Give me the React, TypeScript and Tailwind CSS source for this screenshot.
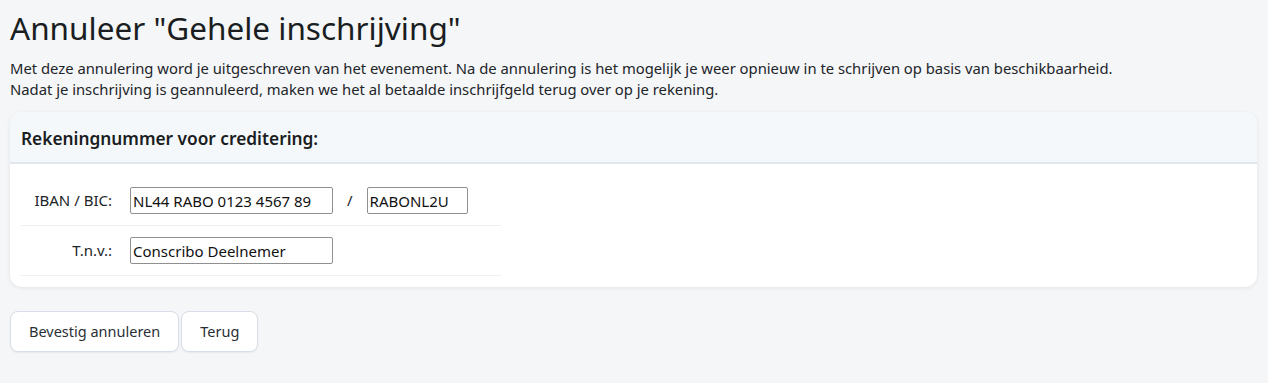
import React from "react";

export default function App() {
  return (
    <div className="min-h-[383px] bg-[#f5f6f8] px-[10px] pt-[6px] text-[#212529] font-['Noto_Sans',sans-serif]">
      <h1 className="text-[31.5px] leading-[44px] font-normal text-[#1a1d21]">Annuleer "Gehele inschrijving"</h1>
      <p className="mt-[8px] text-[14.8px] leading-[21px]">
        Met deze annulering word je uitgeschreven van het evenement. Na de annulering is het mogelijk je weer opnieuw in te schrijven op basis van beschikbaarheid.
        <br />
        Nadat je inschrijving is geannuleerd, maken we het al betaalde inschrijfgeld terug over op je rekening.
      </p>
      <div className="mt-[12px] mr-[1px] rounded-[12px] bg-white shadow-[0_1px_4px_rgba(0,0,0,0.08)] overflow-hidden">
        <div className="h-[52px] bg-[#f5f8fb] border-b-2 border-[#e1e7ef] px-[11px] pt-[3px] flex items-center">
          <h2 className="text-[17.3px] font-semibold text-[#1a1d21]">Rekeningnummer voor creditering:</h2>
        </div>
        <div className="px-[11px] pt-[12px] pb-[11px]">
          <div className="w-[480px]">
            <div className="flex items-center h-[50px] border-b border-[#eef0f3]">
              <div className="w-[91px] text-right text-[15px]">IBAN / BIC:</div>
              <input
                readOnly
                value="NL44 RABO 0123 4567 89"
                className="ml-[18px] w-[203px] h-[27px] border border-[#8f8f8f] rounded-[2px] px-[2px] text-[15px] text-[#111] outline-none"
              />
              <span className="mx-[14px] text-[15px]">/</span>
              <input
                readOnly
                value="RABONL2U"
                className="w-[101px] h-[27px] border border-[#8f8f8f] rounded-[2px] px-[2px] text-[15px] text-[#111] outline-none"
              />
            </div>
            <div className="flex items-center h-[50px] border-b border-[#eef0f3]">
              <div className="w-[91px] text-right text-[15px]">T.n.v.:</div>
              <input
                readOnly
                value="Conscribo Deelnemer"
                className="ml-[18px] w-[203px] h-[27px] border border-[#8f8f8f] rounded-[2px] px-[2px] text-[15px] text-[#111] outline-none"
              />
            </div>
          </div>
        </div>
      </div>
      <div className="mt-[24px] flex gap-[2px]">
        <button className="h-[41px] px-[18px] bg-white border border-[#d8dee8] rounded-[8px] shadow-[0_1px_2px_rgba(0,0,0,0.06)] text-[14.5px] text-[#2a2f36]">Bevestig annuleren</button>
        <button className="h-[41px] px-[18px] bg-white border border-[#d8dee8] rounded-[8px] shadow-[0_1px_2px_rgba(0,0,0,0.06)] text-[14.5px] text-[#2a2f36]">Terug</button>
      </div>
    </div>
  );
}
